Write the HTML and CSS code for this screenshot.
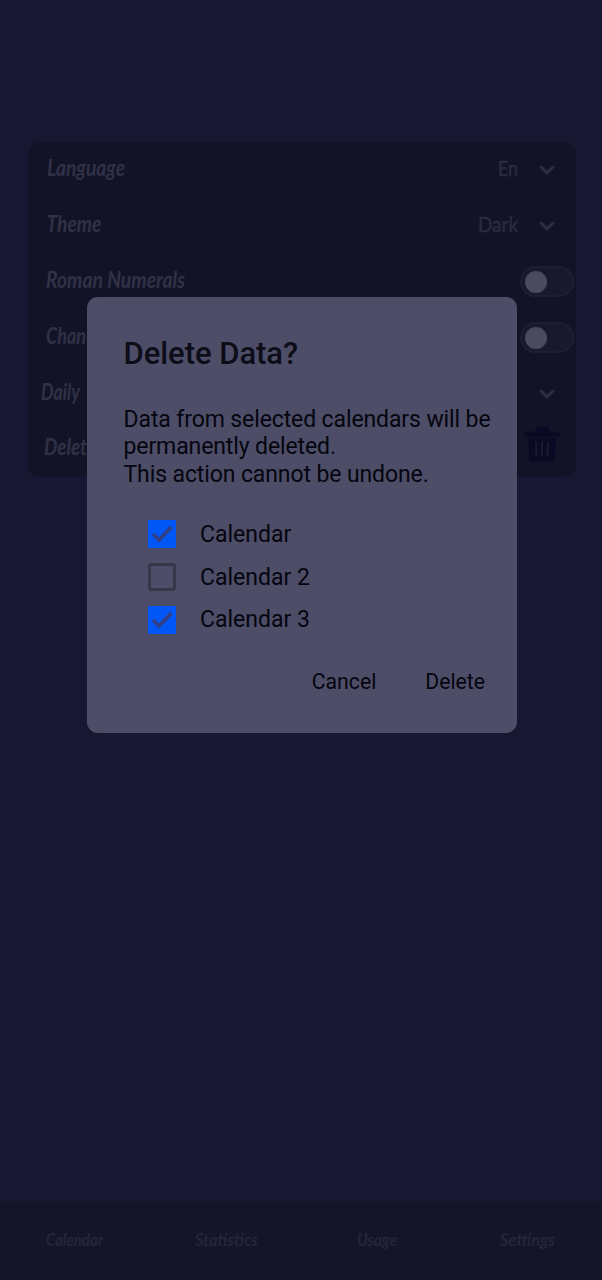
FILE: index.html
```html
<!DOCTYPE html>
<html lang="en">
<head>
<meta charset="utf-8">
<title>Settings</title>
<link rel="stylesheet" href="styles.css">
</head>
<body>
<div class="app">
  <main class="settings">
    <div class="row"><svg class="label" width="200" height="56"><text x="19" y="35" textLength="78" lengthAdjust="spacingAndGlyphs">Language</text></svg><svg class="value" width="60" height="56"><text x="20" y="34" textLength="20" lengthAdjust="spacingAndGlyphs">En</text></svg><svg class="chevron" width="18" height="12" viewBox="0 0 18 12"><path d="M2.500 2.500l6.500 6.500 6.500-6.500"/></svg></div>
    <div class="row"><svg class="label" width="200" height="56"><text x="18.500" y="35" textLength="55" lengthAdjust="spacingAndGlyphs">Theme</text></svg><svg class="value" width="60" height="56"><text x="0" y="34" textLength="40" lengthAdjust="spacingAndGlyphs">Dark</text></svg><svg class="chevron" width="18" height="12" viewBox="0 0 18 12"><path d="M2.500 2.500l6.500 6.500 6.500-6.500"/></svg></div>
    <div class="row"><svg class="label" width="200" height="56"><text x="18" y="35" textLength="139" lengthAdjust="spacingAndGlyphs">Roman Numerals</text></svg><span class="switch"><i class="knob"></i></span></div>
    <div class="row"><svg class="label" width="200" height="56"><text x="18" y="35" textLength="40" lengthAdjust="spacingAndGlyphs">Chan</text></svg><span class="switch"><i class="knob"></i></span></div>
    <div class="row"><svg class="label" width="200" height="56"><text x="13" y="35" textLength="39" lengthAdjust="spacingAndGlyphs">Daily</text></svg><svg class="chevron" width="18" height="12" viewBox="0 0 18 12"><path d="M2.500 2.500l6.500 6.500 6.500-6.500"/></svg></div>
    <div class="row"><svg class="label" width="200" height="56"><text x="16" y="35" textLength="43" lengthAdjust="spacingAndGlyphs">Delet</text></svg>
      <svg class="trash" width="36" height="36" viewBox="0 0 36 36"><path class="bin" d="M.5 11V8.500q0-3 3.500-3h7l1-3.500q.6-1.500 2.500-1.500h8q1.800 0 2.500 1.500l1 3.500h6q3.500 0 3.500 3V11zM4 12h28l-1.500 21q-.2 2.500-2.500 2.500H7.500q-2.300 0-2.500-2.500z"/><path class="slot" d="M12 15.500l.5 15M18 15.500v15M24 15.500l-.5 15"/></svg></div>
  </main>
  <nav class="tabs">
    <svg width="150" height="78"><text x="46" y="44" textLength="57" lengthAdjust="spacingAndGlyphs">Calendar</text></svg>
    <svg width="150" height="78"><text x="45" y="44" textLength="63" lengthAdjust="spacingAndGlyphs">Statistics</text></svg>
    <svg width="150" height="78"><text x="57" y="44" textLength="40" lengthAdjust="spacingAndGlyphs">Usage</text></svg>
    <svg width="152" height="78"><text x="50" y="44" textLength="55" lengthAdjust="spacingAndGlyphs">Settings</text></svg>
  </nav>
</div>
<section class="dialog" role="dialog">
  <h1 class="title">Delete Data?</h1>
  <p class="message">Data from selected calendars will be<br>permanently deleted.<br>This action cannot be undone.</p>
  <div class="options">
    <div class="option"><svg class="box on" width="28" height="28"><rect width="28" height="28"/><path d="M5 14l6 6L23.500 7"/></svg><span>Calendar</span></div>
    <div class="option"><svg class="box" width="28" height="28"><rect x="1.500" y="1.500" width="25" height="25" rx="1.500"/></svg><span>Calendar 2</span></div>
    <div class="option"><svg class="box on" width="28" height="28"><rect width="28" height="28"/><path d="M5 14l6 6L23.500 7"/></svg><span>Calendar 3</span></div>
  </div>
  <div class="actions"><span>Cancel</span><span>Delete</span></div>
</section>
</body>
</html>
```
FILE: styles.css
```css
* { box-sizing: border-box; }
body { margin: 0; background: #171731; font-family: Roboto, sans-serif; }
.app { height: 1280px; display: flex; flex-direction: column; padding-top: 142px; }
.settings { width: 548px; height: 335px; margin-left: 28px; border-radius: 12px; background: #131328; padding-right: 20px; }
.row { height: 55.900px; display: flex; align-items: center; }
.label { margin-top: -2px; margin-right: auto; }
.label text, .value text, .tabs text { font: italic 700 22px Lato, sans-serif; fill: #313146; }
.value { overflow: visible; }
.value text { font-weight: 400; font-style: normal; fill: #2b2b40; stroke: #2b2b40; stroke-width: .5px; }
.chevron { fill: none; stroke: #2f2f44; stroke-width: 3px; }
.switch { width: 54px; height: 31px; margin-right: -18px; border: 2px solid #1e1e33; border-radius: 16px; background: #19192d; padding: 2.500px 3px; }
.knob { display: block; width: 22px; height: 22px; border-radius: 50%; background: #4c4a5e; }
.trash { margin-right: -4px; margin-top: -10px; }
.bin { fill: #0b0a24; }
.slot { fill: none; stroke: #1a1930; stroke-width: 2px; }
.tabs { height: 78px; margin-top: auto; display: flex; background: #151529; }
.tabs text { font-size: 16.500px; fill: #252539; }
.dialog { position: absolute; left: 87px; top: 297px; width: 430px; height: 436px; border-radius: 11px; background: #4d4d67; padding: 38px 0 0 36.500px; color: #05050f; }
.title { margin: 0; font-size: 31px; line-height: 37px; font-weight: 500; letter-spacing: -.04px; color: #0d0d19; white-space: nowrap; }
.message { margin: 34px 0 0; font-size: 23px; line-height: 27.300px; letter-spacing: -.11px; white-space: nowrap; }
.options { margin: 25px 0 0 24px; }
.option { height: 42.800px; display: flex; align-items: center; gap: 24.500px; font-size: 23px; }
.box { fill: none; stroke: #363649; stroke-width: 3px; }
.on rect { fill: #0057f5; stroke: none; }
.on path { stroke: #343f83; stroke-width: 3.500px; }
.actions { display: flex; justify-content: flex-end; gap: 49px; margin: 28px 32px 0 0; font-size: 21.200px; line-height: 25px; }
```
